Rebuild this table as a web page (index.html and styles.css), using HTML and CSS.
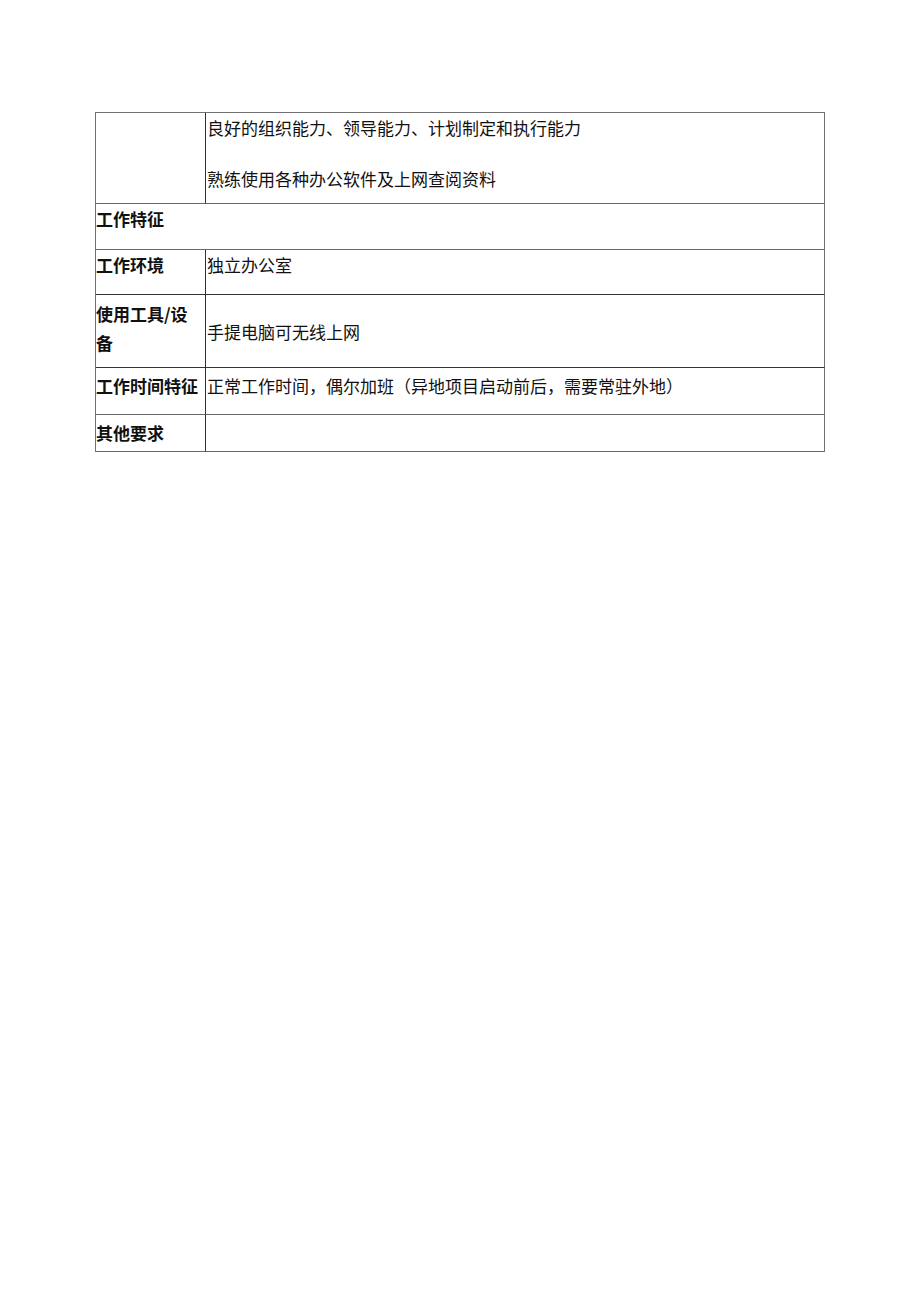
FILE: index.html
```html
<!DOCTYPE html>
<html lang="zh-CN">
<head>
<meta charset="utf-8">
<title>岗位说明</title>
<link rel="stylesheet" href="styles.css">
</head>
<body>
<div class="sheet">
  <div class="grid">
    <div class="cell label r1"></div>
    <div class="cell value r1">
      <p class="line">良好的组织能力、领导能力、计划制定和执行能力</p>
      <p class="line second">熟练使用各种办公软件及上网查阅资料</p>
    </div>

    <div class="cell label span r2">工作特征</div>

    <div class="cell label r3">工作环境</div>
    <div class="cell value r3">独立办公室</div>

    <div class="cell label r4 tall">使用工具/设<br>备</div>
    <div class="cell value r4 mid">手提电脑可无线上网</div>

    <div class="cell label r5">工作时间特征</div>
    <div class="cell value r5">正常工作时间，偶尔加班（异地项目启动前后，需要常驻外地）</div>

    <div class="cell label r6">其他要求</div>
    <div class="cell value r6"></div>
  </div>
</div>
</body>
</html>
```

FILE: styles.css
```css
html, body {
  margin: 0;
  padding: 0;
  background: #ffffff;
}

body {
  font-family: "Noto Sans CJK SC", "Liberation Sans", sans-serif;
  font-size: 17px;
  line-height: 24px;
  color: #111111;
}

.sheet {
  padding: 112px 0 0 95px;
}

.grid {
  display: grid;
  width: 729px;
  grid-template-columns: 110px 619px;
  grid-template-rows: 91px 46px 45px 73px 47px 37px;
  border-top: 1px solid #707070;
  border-left: 1px solid #707070;
}

.cell {
  box-sizing: border-box;
  border-right: 1px solid #555555;
  border-bottom: 1px solid #6a6a6a;
  padding-left: 1px;
  white-space: nowrap;
}

.label {
  font-weight: 700;
  padding-left: 0;
}

.value {
  font-weight: 400;
  padding-left: 1px;
}

.span {
  grid-column: 1 / span 2;
  border-right-color: #707070;
}

.value {
  border-right-color: #707070;
}

.line {
  margin: 0;
}

.line.second {
  margin-top: 27px;
}

.r1 { padding-top: 3px; }
.r2 { padding-top: 3px; }
.r3 { padding-top: 3px; }
.r4 { padding-top: 4px; }
.r4.tall { line-height: 29px; }
.r4.mid { padding-top: 25px; }
.r5 { padding-top: 6px; }
.r6 { padding-top: 6px; }

.r3, .r4 { border-bottom-color: #333333; }
.label { border-right-color: #333333; }
.span { border-right-color: #707070; }
```
